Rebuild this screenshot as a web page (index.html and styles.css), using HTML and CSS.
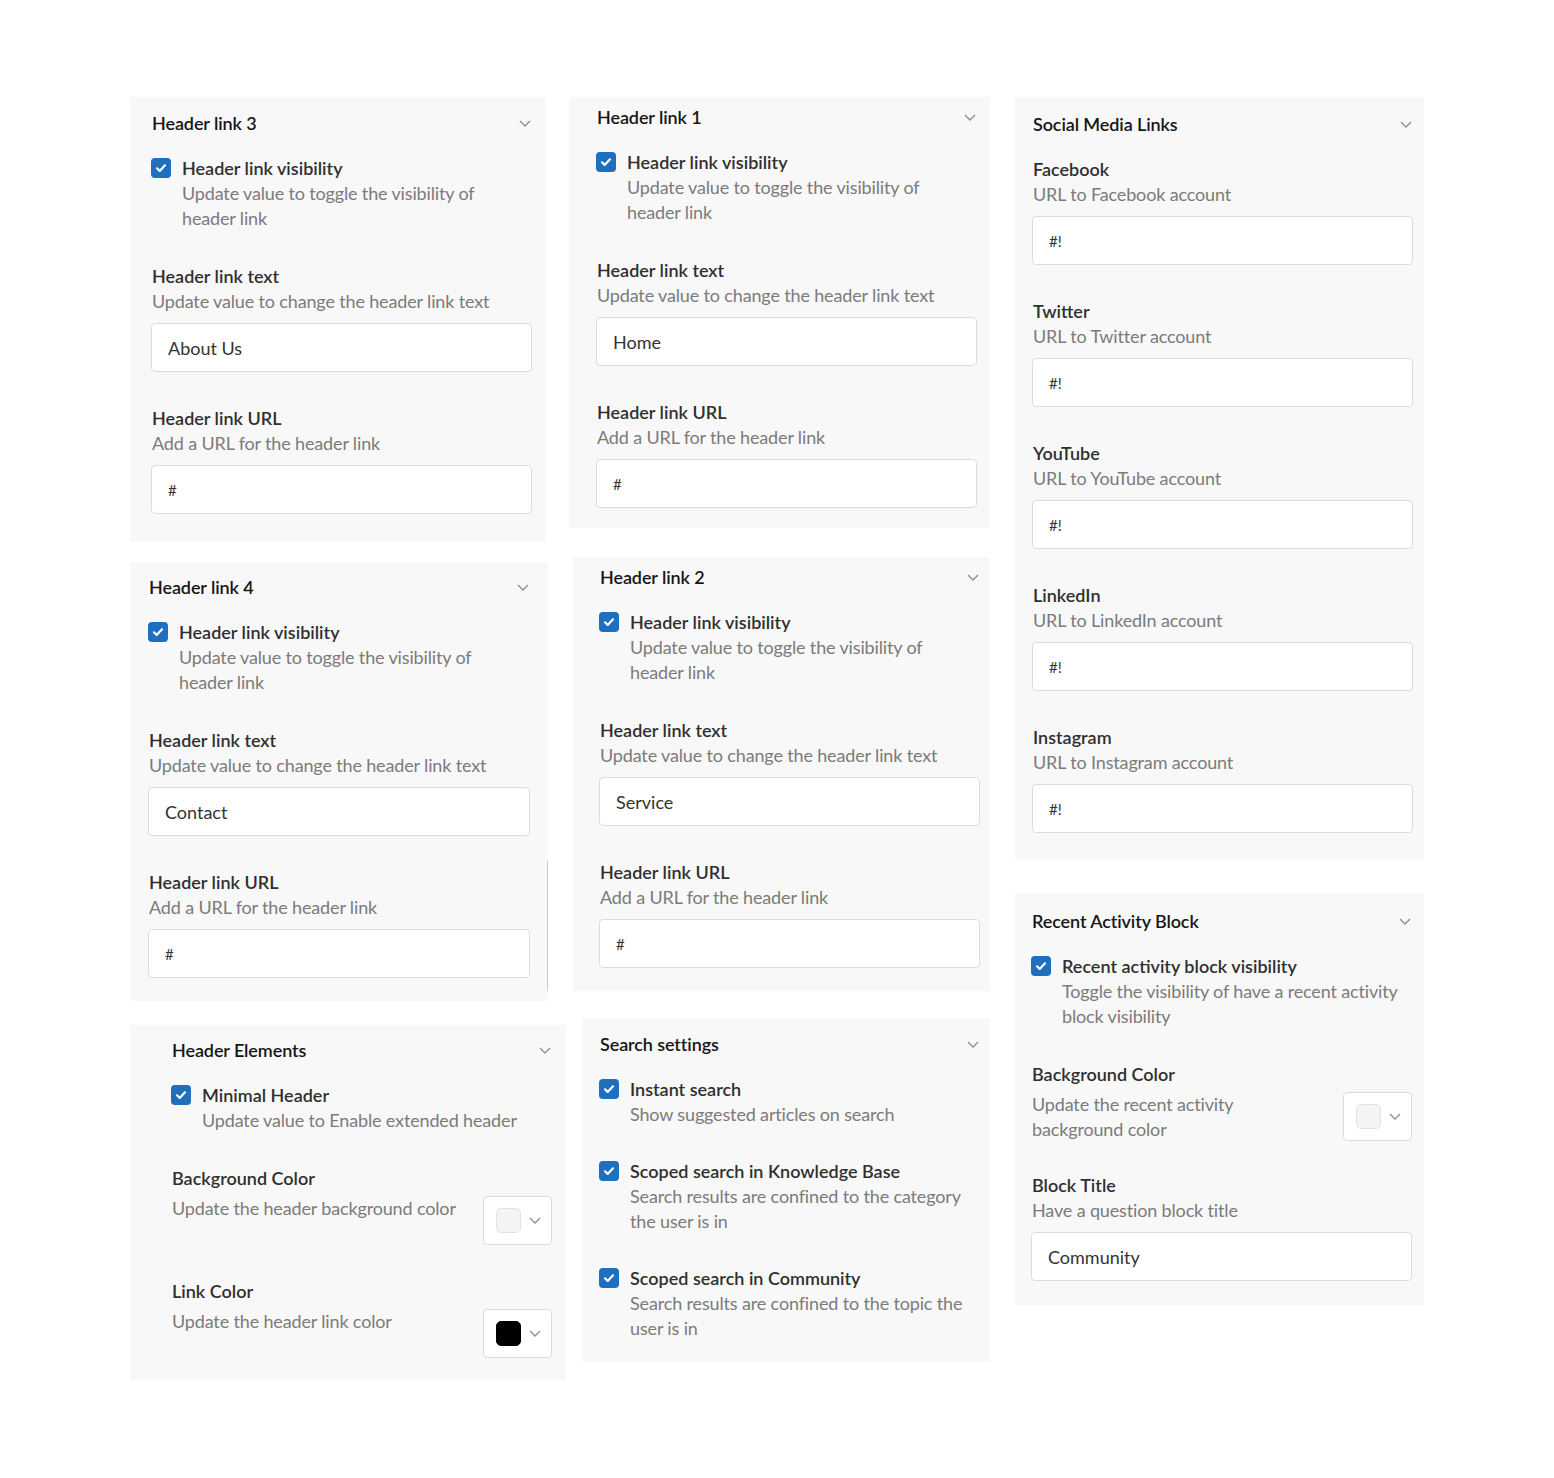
FILE: index.html
```html
<!DOCTYPE html>
<html>
 <head>
  <title>Theme settings</title><meta charset="utf-8">
  <link rel="stylesheet" href="styles.css">
 </head>
 <body>
  <main class="board">

    <div class="column col-left">
      <section class="panel panel-link3">
        <header class="panel-head">
          <h2 class="panel-title">Header link 3</h2>
          <svg class="chevron" width="12" height="7" viewBox="0 0 12 7"><path d="M1 1l5 5 5-5"/></svg>
        </header>
        <div class="check-item">
          <span class="checkbox"><svg width="20" height="20" viewBox="0 0 20 20"><path d="M6 10.3l2.7 2.6 5.3-5.6"/></svg></span>
          <div>
            <div class="label">Header link visibility</div>
            <p class="desc">Update value to toggle the visibility of<br>header link</p>
          </div>
        </div>
        <div class="field">
          <div class="label">Header link text</div>
          <p class="desc">Update value to change the header link text</p>
          <input class="input" type="text" value="About Us" readonly>
        </div>
        <div class="field">
          <div class="label">Header link URL</div>
          <p class="desc">Add a URL for the header link</p>
          <input class="input small" type="text" value="#" readonly>
        </div>
      </section>

      <section class="panel panel-link4">
        <header class="panel-head">
          <h2 class="panel-title">Header link 4</h2>
          <svg class="chevron" width="12" height="7" viewBox="0 0 12 7"><path d="M1 1l5 5 5-5"/></svg>
        </header>
        <div class="check-item">
          <span class="checkbox"><svg width="20" height="20" viewBox="0 0 20 20"><path d="M6 10.3l2.7 2.6 5.3-5.6"/></svg></span>
          <div>
            <div class="label">Header link visibility</div>
            <p class="desc">Update value to toggle the visibility of<br>header link</p>
          </div>
        </div>
        <div class="field">
          <div class="label">Header link text</div>
          <p class="desc">Update value to change the header link text</p>
          <input class="input" type="text" value="Contact" readonly>
        </div>
        <div class="field">
          <div class="label">Header link URL</div>
          <p class="desc">Add a URL for the header link</p>
          <input class="input small" type="text" value="#" readonly>
        </div>
      </section>

      <section class="panel panel-elements">
        <header class="panel-head">
          <h2 class="panel-title">Header Elements</h2>
          <svg class="chevron" width="12" height="7" viewBox="0 0 12 7"><path d="M1 1l5 5 5-5"/></svg>
        </header>
        <div class="check-item">
          <span class="checkbox"><svg width="20" height="20" viewBox="0 0 20 20"><path d="M6 10.3l2.7 2.6 5.3-5.6"/></svg></span>
          <div>
            <div class="label">Minimal Header</div>
            <p class="desc">Update value to Enable extended header</p>
          </div>
        </div>
        <div class="field">
          <div class="label">Background Color</div>
          <div class="color-row">
            <p class="desc">Update the header background color</p>
            <div class="picker">
              <span class="swatch"></span>
              <svg class="chevron" width="12" height="7" viewBox="0 0 12 7"><path d="M1 1l5 5 5-5"/></svg>
            </div>
          </div>
        </div>
        <div class="field">
          <div class="label">Link Color</div>
          <div class="color-row">
            <p class="desc">Update the header link color</p>
            <div class="picker">
              <span class="swatch dark"></span>
              <svg class="chevron" width="12" height="7" viewBox="0 0 12 7"><path d="M1 1l5 5 5-5"/></svg>
            </div>
          </div>
        </div>
      </section>
    </div>

    <div class="column col-middle">
      <section class="panel panel-link1">
        <header class="panel-head">
          <h2 class="panel-title">Header link 1</h2>
          <svg class="chevron" width="12" height="7" viewBox="0 0 12 7"><path d="M1 1l5 5 5-5"/></svg>
        </header>
        <div class="check-item">
          <span class="checkbox"><svg width="20" height="20" viewBox="0 0 20 20"><path d="M6 10.3l2.7 2.6 5.3-5.6"/></svg></span>
          <div>
            <div class="label">Header link visibility</div>
            <p class="desc">Update value to toggle the visibility of<br>header link</p>
          </div>
        </div>
        <div class="field">
          <div class="label">Header link text</div>
          <p class="desc">Update value to change the header link text</p>
          <input class="input" type="text" value="Home" readonly>
        </div>
        <div class="field">
          <div class="label">Header link URL</div>
          <p class="desc">Add a URL for the header link</p>
          <input class="input small" type="text" value="#" readonly>
        </div>
      </section>

      <section class="panel panel-link2">
        <header class="panel-head">
          <h2 class="panel-title">Header link 2</h2>
          <svg class="chevron" width="12" height="7" viewBox="0 0 12 7"><path d="M1 1l5 5 5-5"/></svg>
        </header>
        <div class="check-item">
          <span class="checkbox"><svg width="20" height="20" viewBox="0 0 20 20"><path d="M6 10.3l2.7 2.6 5.3-5.6"/></svg></span>
          <div>
            <div class="label">Header link visibility</div>
            <p class="desc">Update value to toggle the visibility of<br>header link</p>
          </div>
        </div>
        <div class="field">
          <div class="label">Header link text</div>
          <p class="desc">Update value to change the header link text</p>
          <input class="input" type="text" value="Service" readonly>
        </div>
        <div class="field">
          <div class="label">Header link URL</div>
          <p class="desc">Add a URL for the header link</p>
          <input class="input small" type="text" value="#" readonly>
        </div>
      </section>

      <section class="panel panel-search">
        <header class="panel-head">
          <h2 class="panel-title">Search settings</h2>
          <svg class="chevron" width="12" height="7" viewBox="0 0 12 7"><path d="M1 1l5 5 5-5"/></svg>
        </header>
        <div class="check-item">
          <span class="checkbox"><svg width="20" height="20" viewBox="0 0 20 20"><path d="M6 10.3l2.7 2.6 5.3-5.6"/></svg></span>
          <div>
            <div class="label">Instant search</div>
            <p class="desc">Show suggested articles on search</p>
          </div>
        </div>
        <div class="check-item">
          <span class="checkbox"><svg width="20" height="20" viewBox="0 0 20 20"><path d="M6 10.3l2.7 2.6 5.3-5.6"/></svg></span>
          <div>
            <div class="label">Scoped search in Knowledge Base</div>
            <p class="desc">Search results are confined to the category<br>the user is in</p>
          </div>
        </div>
        <div class="check-item">
          <span class="checkbox"><svg width="20" height="20" viewBox="0 0 20 20"><path d="M6 10.3l2.7 2.6 5.3-5.6"/></svg></span>
          <div>
            <div class="label">Scoped search in Community</div>
            <p class="desc">Search results are confined to the topic the<br>user is in</p>
          </div>
        </div>
      </section>
    </div>

    <div class="column col-right">
      <section class="panel panel-social">
        <header class="panel-head">
          <h2 class="panel-title">Social Media Links</h2>
          <svg class="chevron" width="12" height="7" viewBox="0 0 12 7"><path d="M1 1l5 5 5-5"/></svg>
        </header>
        <div class="field first">
          <div class="label">Facebook</div>
          <p class="desc">URL to Facebook account</p>
          <input class="input small" type="text" value="#!" readonly>
        </div>
        <div class="field">
          <div class="label">Twitter</div>
          <p class="desc">URL to Twitter account</p>
          <input class="input small" type="text" value="#!" readonly>
        </div>
        <div class="field">
          <div class="label">YouTube</div>
          <p class="desc">URL to YouTube account</p>
          <input class="input small" type="text" value="#!" readonly>
        </div>
        <div class="field">
          <div class="label">LinkedIn</div>
          <p class="desc">URL to LinkedIn account</p>
          <input class="input small" type="text" value="#!" readonly>
        </div>
        <div class="field">
          <div class="label">Instagram</div>
          <p class="desc">URL to Instagram account</p>
          <input class="input small" type="text" value="#!" readonly>
        </div>
      </section>

      <section class="panel panel-activity">
        <header class="panel-head">
          <h2 class="panel-title">Recent Activity Block</h2>
          <svg class="chevron" width="12" height="7" viewBox="0 0 12 7"><path d="M1 1l5 5 5-5"/></svg>
        </header>
        <div class="check-item">
          <span class="checkbox"><svg width="20" height="20" viewBox="0 0 20 20"><path d="M6 10.3l2.7 2.6 5.3-5.6"/></svg></span>
          <div>
            <div class="label">Recent activity block visibility</div>
            <p class="desc">Toggle the visibility of have a recent activity<br>block visibility</p>
          </div>
        </div>
        <div class="field">
          <div class="label">Background Color</div>
          <div class="color-row">
            <p class="desc">Update the recent activity<br>background color</p>
            <div class="picker">
              <span class="swatch"></span>
              <svg class="chevron" width="12" height="7" viewBox="0 0 12 7"><path d="M1 1l5 5 5-5"/></svg>
            </div>
          </div>
        </div>
        <div class="field tight">
          <div class="label">Block Title</div>
          <p class="desc">Have a question block title</p>
          <input class="input" type="text" value="Community" readonly>
        </div>
      </section>
    </div>

  </main>
 </body>
</html>
```

FILE: styles.css
```css
body {
  margin: 0;
  background: #fff;
  font-family: Lato, "Open Sans", sans-serif;
  font-size: 18px;
  line-height: 25px;
  color: #2b2b2b;
}

.board {
  display: flex;
  align-items: flex-start;
  padding: 97px 0 0 130px;
}

.column {
  display: flex;
  flex-direction: column;
  align-items: flex-start;
}

.col-left {
  width: 436px;
}

.col-middle {
  width: 421px;
  margin-left: 3px;
}

.col-right {
  width: 409px;
  margin-left: 25px;
}

/* panels */

.panel {
  box-sizing: border-box;
  background: #f8f8f8;
  display: flex;
  flex-direction: column;
}

.panel-link3 {
  width: 416px;
  height: 445px;
  padding: 14px 14px 0 21px;
}

.panel-link4 {
  width: 418px;
  height: 439px;
  margin-top: 20px;
  padding: 13px 18px 0 18px;
  background: linear-gradient(#c9c9c9, #c9c9c9) right 0 bottom 10px / 1px 130px no-repeat, #f8f8f8;
}

.panel-elements {
  width: 436px;
  height: 355px;
  margin-top: 24px;
  padding: 13px 14px 0 41px;
}

.panel-link1 {
  width: 421px;
  height: 431px;
  padding: 8px 13px 0 27px;
}

.panel-link2 {
  width: 417px;
  height: 434px;
  margin-top: 29px;
  margin-left: 4px;
  padding: 8px 10px 0 26px;
}

.panel-search {
  width: 408px;
  height: 344px;
  margin-top: 27px;
  margin-left: 13px;
  padding: 14px 10px 0 17px;
}

.panel-social {
  width: 409px;
  height: 763px;
  padding: 15px 11px 0 17px;
}

.panel-activity {
  width: 409px;
  height: 412px;
  margin-top: 33px;
  padding: 16px 12px 0 16px;
}

.panel-head {
  display: flex;
  align-items: center;
  justify-content: space-between;
  height: 25px;
  margin-bottom: 20px;
}

.panel-title {
  margin: 0;
  font-size: 18px;
  font-weight: 600;
  line-height: 25px;
  color: #161616;
  padding-left: 1px;
  letter-spacing: -0.1px;
}

.chevron {
  display: block;
  margin-right: 1px;
}

.chevron path {
  fill: none;
  stroke: #8c8c8c;
  stroke-width: 1.3;
}

/* form rows */

.label {
  font-weight: 600;
  color: #2f2f2f;
  padding-left: 1px;
}

.desc {
  margin: 0;
  color: #7b7b7b;
  padding-left: 1px;
  letter-spacing: -0.15px;
}

.check-item {
  display: flex;
  gap: 10px;
}

.check-item + .check-item {
  margin-top: 32px;
}

.checkbox {
  flex: none;
  width: 20px;
  height: 20px;
  margin-top: 2px;
  border-radius: 4px;
  background: #1e6fbe;
}

.checkbox svg {
  display: block;
}

.checkbox path {
  fill: none;
  stroke: #fff;
  stroke-width: 2.2;
  stroke-linecap: round;
  stroke-linejoin: round;
}

.field {
  margin-top: 34px;
}

.check-item + .field {
  margin-top: 33px;
}

.field.first {
  margin-top: 0;
}

.field.tight {
  margin-top: 31px;
}

.input {
  display: block;
  box-sizing: border-box;
  width: 100%;
  height: 49px;
  margin-top: 9px;
  padding: 0 16px;
  border: 1px solid #dcdcdc;
  border-radius: 4px;
  background: #fff;
  font-family: inherit;
  font-size: 18px;
  color: #333;
  outline: none;
}

.input.small {
  font-size: 15px;
}

.color-row {
  display: flex;
  align-items: flex-start;
  justify-content: space-between;
  gap: 16px;
  margin-top: 5px;
}

.picker {
  flex: none;
  box-sizing: border-box;
  display: flex;
  align-items: center;
  gap: 8px;
  width: 69px;
  height: 49px;
  padding-left: 12px;
  border: 1px solid #dcdcdc;
  border-radius: 4px;
  background: #fff;
}

.swatch {
  box-sizing: border-box;
  width: 25px;
  height: 25px;
  border-radius: 5px;
  border: 1px solid #e2e2e2;
  background: #f4f4f4;
}

.swatch.dark {
  border-color: #000;
  background: #000;
}
```
